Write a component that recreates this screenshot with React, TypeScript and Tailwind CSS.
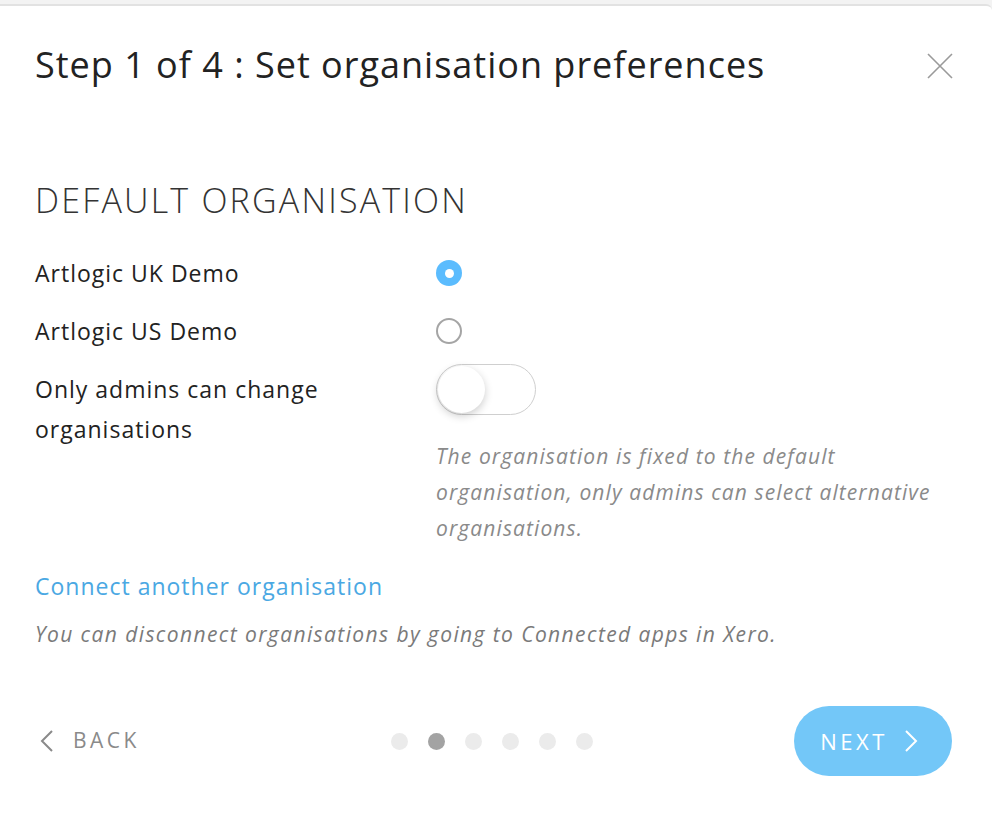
import React from "react";

export default function App() {
  const dots = [false, true, false, false, false, false];
  return (
    <div className="w-[992px] h-[822px] bg-[#f3f3f3] overflow-hidden" style={{ fontFamily: "'Open Sans', Lato, sans-serif" }}>
      <div className="mt-[4px] h-[818px] bg-white border-t-2 border-[#e2e2e2] rounded-tr-[6px] flex flex-col">
        <div className="flex items-center justify-between pl-[35px] pr-[38px] pt-[37px]">
          <h1 className="text-[36px] leading-[44px] text-[#222] tracking-[1px] whitespace-nowrap">Step 1 of 4 : Set organisation preferences</h1>
          <svg width="28" height="28" viewBox="0 0 28 28" className="mt-[2px] shrink-0">
            <path d="M2 2 L26 26 M26 2 L2 26" stroke="#9a9a9a" strokeWidth="1.6" fill="none" />
          </svg>
        </div>

        <div className="pl-[35px] pr-[40px] pt-[93px]">
          <h2 className="text-[34px] leading-[40px] text-[#333] font-light tracking-[2.2px]">DEFAULT ORGANISATION</h2>

          <div className="mt-[38px] flex items-center h-[30px]">
            <div className="w-[401px] shrink-0 text-[23px] tracking-[1px] text-[#222]">Artlogic UK Demo</div>
            <div className="w-[26px] h-[26px] rounded-full bg-[#5bbcfe] flex items-center justify-center">
              <div className="w-[9px] h-[9px] rounded-full bg-white" />
            </div>
          </div>

          <div className="mt-[28px] flex items-center h-[30px]">
            <div className="w-[401px] shrink-0 text-[23px] tracking-[1px] text-[#222]">Artlogic US Demo</div>
            <div className="w-[26px] h-[26px] rounded-full border-2 border-[#a5a5a5]" />
          </div>

          <div className="mt-[18px] flex items-start">
            <div className="w-[401px] shrink-0 pt-[5px] text-[23px] tracking-[1px] leading-[40px] text-[#222]">
              Only admins can change<br />organisations
            </div>
            <div className="flex flex-col">
              <div className="w-[100px] h-[51px] rounded-full border border-[#cfcfcf] bg-white relative">
                <div className="absolute left-[1px] top-[1px] w-[47px] h-[47px] rounded-full bg-white shadow-[0_3px_8px_rgba(0,0,0,0.2)]" />
              </div>
              <p className="mt-[23px] text-[21px] leading-[36px] tracking-[1.1px] italic text-[#8a8a8a] w-[540px] whitespace-nowrap">
                The organisation is fixed to the default<br />organisation, only admins can select alternative<br />organisations.
              </p>
            </div>
          </div>

          <div className="mt-[23px] text-[23px] tracking-[1px] text-[#4aa8e3]">Connect another organisation</div>
          <p className="mt-[15px] text-[21px] tracking-[1.4px] italic text-[#7a7a7a] whitespace-nowrap">You can disconnect organisations by going to Connected apps in Xero.</p>
        </div>

        <div className="mt-[56px] flex items-center justify-between pl-[40px] pr-[40px]">
          <div className="flex items-center gap-[19px] w-[200px]">
            <svg width="14" height="22" viewBox="0 0 14 22">
              <path d="M12 1 L2 11 L12 21" stroke="#8a8a8a" strokeWidth="2" fill="none" />
            </svg>
            <span className="text-[21px] tracking-[3.5px] text-[#8a8a8a]">BACK</span>
          </div>
          <div className="flex items-center gap-[20px] ml-[151px]">
            {dots.map((a, i) => (
              <div key={i} className={a ? "w-[17px] h-[17px] rounded-full bg-[#a3a3a3]" : "w-[17px] h-[17px] rounded-full bg-[#ebebeb]"} />
            ))}
          </div>
          <button className="ml-auto w-[158px] h-[70px] rounded-full bg-[#73c7f8] text-white flex items-center justify-center gap-[16px] pr-[8px]">
            <span className="text-[22px] tracking-[3.5px]">NEXT</span>
            <svg width="14" height="22" viewBox="0 0 14 22">
              <path d="M2 1 L12 11 L2 21" stroke="#ffffff" strokeWidth="2" fill="none" />
            </svg>
          </button>
        </div>
      </div>
    </div>
  );
}
